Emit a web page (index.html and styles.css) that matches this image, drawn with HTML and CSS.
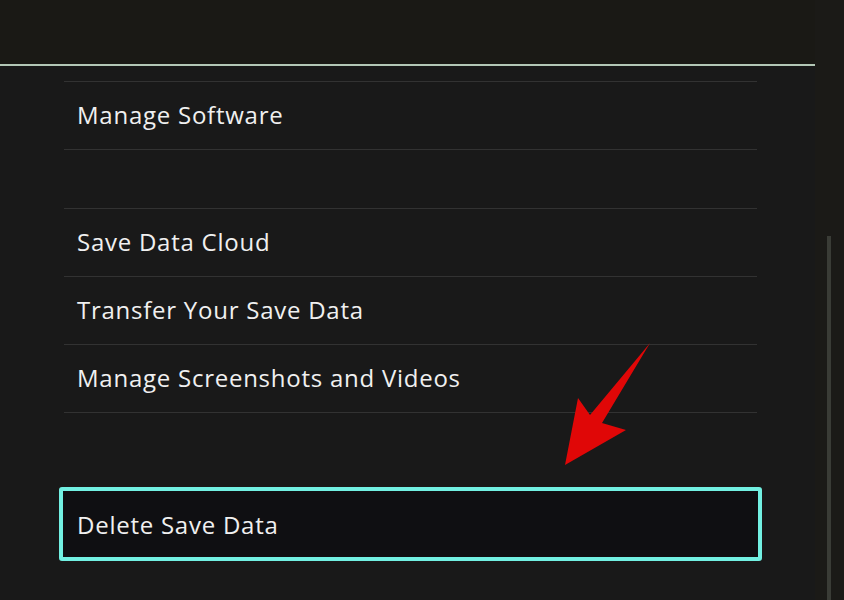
FILE: index.html
```html
<!DOCTYPE html>
<html>
<head>
<meta charset="utf-8">
<link rel="stylesheet" href="styles.css">
</head>
<body>
<div class="screen">
  <div class="main">
    <div class="header"></div>
    <div class="list">
      <div class="group">
        <div class="row">Manage Software</div>
      </div>
      <div class="group">
        <div class="row">Save Data Cloud</div>
        <div class="row">Transfer Your Save Data</div>
        <div class="row">Manage Screenshots and Videos</div>
      </div>
      <div class="row selected">Delete Save Data</div>
    </div>
  </div>
  <div class="side">
    <div class="side-head"></div>
    <div class="track"></div>
  </div>
  <svg class="arrow" width="844" height="600" viewBox="0 0 844 600">
    <polygon points="565,465 578,398 590,415 650,343 602,423 626,430" fill="#e00707"/>
  </svg>
</div>
</body>
</html>
```
FILE: styles.css
```css
html, body {
  margin: 0;
  padding: 0;
  background: #191919;
}
.screen {
  position: relative;
  width: 844px;
  height: 600px;
  overflow: hidden;
  display: flex;
  font-family: "Open Sans", "Noto Sans", sans-serif;
  color: #f0f0f0;
}
.main {
  width: 815px;
  display: flex;
  flex-direction: column;
}
.header {
  height: 64px;
  background: #1a1915;
  border-bottom: 2px solid #b3c7b6;
}
.list {
  margin: 15px 58px 0 64px;
  display: flex;
  flex-direction: column;
}
.group {
  border-top: 1px solid #323232;
  margin-bottom: 58px;
}
.group + .group {
  margin-bottom: 74px;
}
.row {
  height: 67px;
  border-bottom: 1px solid #323232;
  display: flex;
  align-items: center;
  padding-left: 13px;
  padding-bottom: 2px;
  box-sizing: border-box;
  height: 68px;
  font-size: 24px;
  letter-spacing: 0.75px;
}
.row.selected {
  height: 74px;
  margin: 0 -5px;
  border: 4px solid #72f0e2;
  border-radius: 3px;
  background: #0f0f12;
  padding-left: 14px;
  padding-bottom: 0;
}
.side {
  flex: 1;
  display: flex;
  flex-direction: column;
  background: #1b1a17;
}
.side-head {
  height: 236px;
}
.track {
  width: 4px;
  margin-left: 12px;
  flex: 1;
  background: #3a3c36;
}
.arrow {
  position: absolute;
  left: 0;
  top: 0;
  pointer-events: none;
}
```
